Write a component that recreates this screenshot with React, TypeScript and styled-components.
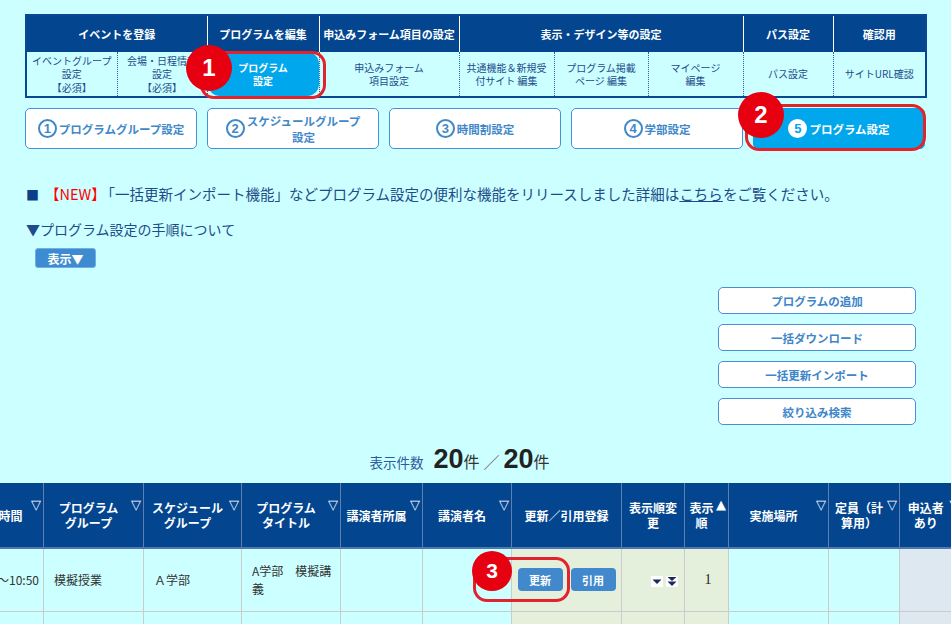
import { FC } from 'react';
import styled, { createGlobalStyle } from 'styled-components';

const GlobalStyle = createGlobalStyle`
  body {
    margin: 0;
    background: #ccffff;
    font-family: 'Noto Sans CJK JP', 'Noto Sans', sans-serif;
    overflow: hidden;
  }
`;

const Page = styled.div`
  position: relative;
  width: 951px;
  height: 624px;
  overflow: hidden;
`;

/* ---- top navigation ---- */

const NavTable = styled.table`
  width: 900px;
  margin: 14px 25px 0;
  border-collapse: collapse;
  table-layout: fixed;
  border: 2px solid #0a4893;
`;

const NavHead = styled.th`
  height: 36px;
  padding: 0;
  background: #03468f;
  color: #fff;
  font-size: 11px;
  font-weight: 700;
  border-left: 1px solid #ffffff;
`;

const NavCell = styled.td`
  height: 44px;
  padding: 0;
  text-align: center;
  color: #1d4c8c;
  font-size: 10px;
  line-height: 13.5px;
  border-left: 1px dotted #2a5fa5;
`;

const ActiveTab = styled.div`
  height: 44px;
  display: flex;
  align-items: center;
  justify-content: center;
  background: #00a7ec;
  color: #fff;
  font-weight: 700;
  border-radius: 12px;
`;

/* ---- step buttons ---- */

const Steps = styled.div`
  display: flex;
  gap: 10px;
  margin: 10px 25px 0;
`;

const StepButton = styled.div<{ $active?: boolean }>`
  width: 172px;
  height: 41px;
  box-sizing: border-box;
  display: flex;
  align-items: center;
  justify-content: center;
  gap: 2px;
  border: 1px solid ${(p) => (p.$active ? '#00a7ec' : '#4a8fd3')};
  border-radius: 5px;
  background: ${(p) => (p.$active ? '#00a7ec' : '#ffffff')};
  color: ${(p) => (p.$active ? '#ffffff' : '#3f88c9')};
  font-size: 11.5px;
  font-weight: 700;
  line-height: 16px;
  text-align: center;
`;

const NumCircle = styled.span<{ $active?: boolean }>`
  width: 19px;
  height: 19px;
  box-sizing: border-box;
  flex: none;
  display: flex;
  align-items: center;
  justify-content: center;
  border-radius: 50%;
  border: 2px solid ${(p) => (p.$active ? '#ffffff' : '#3f88c9')};
  background: ${(p) => (p.$active ? '#ffffff' : 'transparent')};
  color: ${(p) => (p.$active ? '#00a7ec' : '#3f88c9')};
  font-family: 'Liberation Sans', sans-serif;
  font-size: 13px;
  font-weight: 700;
`;

/* ---- notice ---- */

const Notice = styled.p`
  margin: 34px 0 0 26px;
  font-size: 14.5px;
  line-height: 22px;
  color: #1e4b8a;
  white-space: nowrap;

  .sq {
    color: #0d3f88;
    font-size: 13px;
    margin-right: 6px;
  }
  .new {
    color: #ff0000;
    margin-right: 2px;
  }
  a {
    color: #1e4b8a;
    text-decoration: underline;
  }
`;

const Procedure = styled.p`
  margin: 13px 0 0 26px;
  font-size: 14px;
  line-height: 20px;
  color: #1e4b8a;
`;

const ShowButton = styled.div`
  width: 61px;
  height: 20px;
  margin: 9px 0 0 35px;
  box-sizing: border-box;
  display: flex;
  align-items: center;
  justify-content: center;
  background: #3d8bd0;
  border: 1px solid #70aee3;
  border-radius: 3px;
  color: #fff;
  font-size: 12px;
  font-weight: 700;
`;

const ActionList = styled.div`
  display: flex;
  flex-direction: column;
  align-items: flex-end;
  gap: 10px;
  margin: 19px 35px 0 0;
`;

const ActionButton = styled.div`
  width: 198px;
  height: 27px;
  box-sizing: border-box;
  display: flex;
  align-items: center;
  justify-content: center;
  background: #fff;
  border: 1px solid #4a8fd3;
  border-radius: 5px;
  color: #3d86c8;
  font-size: 11.5px;
  font-weight: 700;
`;

/* ---- count ---- */

const Count = styled.div`
  height: 36px;
  margin-top: 19px;
  padding-right: 32px;
  display: flex;
  align-items: baseline;
  justify-content: center;
  color: #333;
  font-size: 16px;

  .label {
    color: #2d5a9c;
    font-size: 13.5px;
    margin-right: 10px;
  }
  b {
    font-family: 'Liberation Sans', sans-serif;
    font-size: 27px;
    color: #222;
  }
  .sep {
    color: #666;
    margin: 0 4px;
  }
`;

/* ---- list table ---- */

const TableWrap = styled.div`
  margin-top: 3px;
  overflow: hidden;
`;

const ListTable = styled.table`
  margin-left: -37px;
  border-collapse: collapse;
  table-layout: fixed;
  width: 998px;
`;

const HeadCell = styled.th<{ $marked?: boolean }>`
  position: relative;
  height: 65px;
  padding: ${(p) => (p.$marked ? '0 14px 0 4px' : '0 3px')};
  box-sizing: border-box;
  background: #03468f;
  color: #fff;
  font-size: 12px;
  font-weight: 700;
  line-height: 15px;
  border-left: 1px solid #5f7fae;
  border-bottom: 2px solid #4f78ae;
`;

const SortMark = styled.span`
  position: absolute;
  top: 15px;
  right: 2px;
  font-family: 'DejaVu Sans', sans-serif;
  font-size: 13px;
  font-weight: 400;
  line-height: 13px;
  color: #fff;
`;

type Tone = 'plain' | 'green' | 'grey';

const toneBg: Record<Tone, string> = {
  plain: '#ccffff',
  green: '#e5f0dc',
  grey: '#dde8f1',
};

const BodyCell = styled.td<{ $tone?: Tone; $align?: string }>`
  height: 63px;
  padding: 0 7px 0 10px;
  box-sizing: border-box;
  background: ${(p) => toneBg[p.$tone ?? 'plain']};
  border: 1px solid #cbcbcb;
  color: #333;
  font-size: 12px;
  line-height: 18px;
  text-align: ${(p) => p.$align ?? 'left'};
  vertical-align: middle;
`;

const TimeCell = styled(BodyCell)`
  padding: 0 4px 0 0;
  white-space: nowrap;
  overflow: hidden;
  direction: rtl;
`;

const EmptyCell = styled(BodyCell)`
  height: 40px;
`;

const ButtonCell = styled(BodyCell)`
  padding: 0;
  white-space: nowrap;
`;

const SmallButton = styled.span`
  display: inline-flex;
  align-items: center;
  justify-content: center;
  width: 45px;
  height: 23px;
  margin: 0 4px;
  border-radius: 4px;
  background: #4189cc;
  color: #fff;
  font-size: 11px;
  font-weight: 700;
`;

const ArrowCell = styled(BodyCell)`
  padding: 0 6px 0 0;
  white-space: nowrap;
`;

const ArrowBox = styled.span`
  display: inline-flex;
  width: 12px;
  height: 11px;
  margin-left: 3px;
  background: #fff;
  vertical-align: middle;
`;

const SerifNum = styled.span`
  font-family: 'Liberation Serif', serif;
  font-size: 14px;
  color: #222;
`;

/* ---- annotations ---- */

const Ring = styled.div<{ $x: number; $y: number; $w: number; $h: number }>`
  position: absolute;
  left: ${(p) => p.$x}px;
  top: ${(p) => p.$y}px;
  width: ${(p) => p.$w}px;
  height: ${(p) => p.$h}px;
  box-sizing: border-box;
  border: 3px solid #e3232c;
  border-radius: 14px;
  pointer-events: none;
  z-index: 2;
`;

const Badge = styled.div<{ $x: number; $y: number; $d: number }>`
  position: absolute;
  left: ${(p) => p.$x}px;
  top: ${(p) => p.$y}px;
  width: ${(p) => p.$d}px;
  height: ${(p) => p.$d}px;
  border-radius: 50%;
  background: #e60010;
  color: #fff;
  display: flex;
  align-items: center;
  justify-content: center;
  font-family: 'Liberation Sans', sans-serif;
  font-size: ${(p) => Math.round(p.$d * 0.52)}px;
  font-weight: 600;
  z-index: 3;
`;

const navCols = [91, 90, 112, 140, 95, 94, 95, 90, 93];
const listCols = [80, 100, 98, 99, 82, 89, 110, 63, 44, 100, 71, 62];

type Head = { label: string[]; mark?: string };

const heads: Head[] = [
  { label: ['開催時間'], mark: '▽' },
  { label: ['プログラム', 'グループ'], mark: '▽' },
  { label: ['スケジュール', 'グループ'], mark: '▽' },
  { label: ['プログラム', 'タイトル'], mark: '▽' },
  { label: ['講演者所属'], mark: '▽' },
  { label: ['講演者名'], mark: '▽' },
  { label: ['更新／引用登録'] },
  { label: ['表示順変', '更'] },
  { label: ['表示', '順'], mark: '▲' },
  { label: ['実施場所'], mark: '▽' },
  { label: ['定員（計', '算用）'], mark: '▽' },
  { label: ['申込者', 'あり'], mark: '▽' },
];

const tones: Tone[] = [
  'plain', 'plain', 'plain', 'plain', 'plain', 'plain',
  'green', 'green', 'green', 'plain', 'plain', 'grey',
];

const Lines: FC<{ lines: string[] }> = ({ lines }) => (
  <div>
    {lines.map((l, i) => (
      <span key={i}>
        {i > 0 && <br />}
        {l}
      </span>
    ))}
  </div>
);

const App: FC = () => {
  return (
    <Page>
      <GlobalStyle />

      <NavTable>
        <colgroup>
          {navCols.map((w, i) => (
            <col key={i} style={{ width: w }} />
          ))}
        </colgroup>
        <thead>
          <tr>
            <NavHead colSpan={2}>イベントを登録</NavHead>
            <NavHead>プログラムを編集</NavHead>
            <NavHead>申込みフォーム項目の設定</NavHead>
            <NavHead colSpan={3}>表示・デザイン等の設定</NavHead>
            <NavHead>パス設定</NavHead>
            <NavHead>確認用</NavHead>
          </tr>
        </thead>
        <tbody>
          <tr>
            <NavCell><Lines lines={['イベントグループ', '設定', '【必須】']} /></NavCell>
            <NavCell><Lines lines={['会場・日程情報', '設定', '【必須】']} /></NavCell>
            <NavCell>
              <ActiveTab><Lines lines={['プログラム', '設定']} /></ActiveTab>
            </NavCell>
            <NavCell><Lines lines={['申込みフォーム', '項目設定']} /></NavCell>
            <NavCell><Lines lines={['共通機能＆新規受', '付サイト 編集']} /></NavCell>
            <NavCell><Lines lines={['プログラム掲載', 'ページ 編集']} /></NavCell>
            <NavCell><Lines lines={['マイページ', '編集']} /></NavCell>
            <NavCell>パス設定</NavCell>
            <NavCell>サイトURL確認</NavCell>
          </tr>
        </tbody>
      </NavTable>

      <Steps>
        <StepButton><NumCircle>1</NumCircle>プログラムグループ設定</StepButton>
        <StepButton>
          <NumCircle>2</NumCircle>
          <span>スケジュールグループ<br />設定</span>
        </StepButton>
        <StepButton><NumCircle>3</NumCircle>時間割設定</StepButton>
        <StepButton><NumCircle>4</NumCircle>学部設定</StepButton>
        <StepButton $active><NumCircle $active>5</NumCircle>プログラム設定</StepButton>
      </Steps>

      <Notice>
        <span className="sq">■</span>
        <span className="new">【NEW】</span>
        「一括更新インポート機能」などプログラム設定の便利な機能をリリースしました詳細は
        <a href="#">こちら</a>をご覧ください。
      </Notice>

      <Procedure>▼プログラム設定の手順について</Procedure>
      <ShowButton>表示▼</ShowButton>

      <ActionList>
        <ActionButton>プログラムの追加</ActionButton>
        <ActionButton>一括ダウンロード</ActionButton>
        <ActionButton>一括更新インポート</ActionButton>
        <ActionButton>絞り込み検索</ActionButton>
      </ActionList>

      <Count>
        <span className="label">表示件数</span>
        <b>20</b>件<span className="sep">／</span><b>20</b>件
      </Count>

      <TableWrap>
        <ListTable>
          <colgroup>
            {listCols.map((w, i) => (
              <col key={i} style={{ width: w }} />
            ))}
          </colgroup>
          <thead>
            <tr>
              {heads.map((h, i) => (
                <HeadCell key={i} $marked={!!h.mark}>
                  <Lines lines={h.label} />
                  {h.mark && <SortMark>{h.mark}</SortMark>}
                </HeadCell>
              ))}
            </tr>
          </thead>
          <tbody>
            <tr>
              <TimeCell $align="right"><span dir="ltr">10:00～10:50</span></TimeCell>
              <BodyCell>模擬授業</BodyCell>
              <BodyCell>Ａ学部</BodyCell>
              <BodyCell>A学部　模擬講義</BodyCell>
              <BodyCell />
              <BodyCell />
              <ButtonCell $tone="green" $align="center">
                <SmallButton>更新</SmallButton>
                <SmallButton>引用</SmallButton>
              </ButtonCell>
              <ArrowCell $tone="green" $align="right">
                <ArrowBox>
                  <svg width="12" height="11" viewBox="0 0 12 11">
                    <polygon points="1.5,3.5 10.5,3.5 6,8" fill="#1a2a5a" />
                  </svg>
                </ArrowBox>
                <ArrowBox>
                  <svg width="12" height="11" viewBox="0 0 12 11">
                    <polygon points="1.5,1 10.5,1 6,5" fill="#1a2a5a" />
                    <polygon points="1.5,5.5 10.5,5.5 6,10" fill="#1a2a5a" />
                  </svg>
                </ArrowBox>
              </ArrowCell>
              <BodyCell $tone="green" $align="center">
                <SerifNum>1</SerifNum>
              </BodyCell>
              <BodyCell />
              <BodyCell />
              <BodyCell $tone="grey" />
            </tr>
            <tr>
              {tones.map((t, i) => (
                <EmptyCell key={i} $tone={t} />
              ))}
            </tr>
          </tbody>
        </ListTable>
      </TableWrap>

      <Ring $x={200} $y={51} $w={126} $h={48} />
      <Badge $x={186} $y={45} $d={46}>1</Badge>
      <Ring $x={745} $y={104} $w={181} $h={47} />
      <Badge $x={738} $y={92} $d={46}>2</Badge>
      <Ring $x={473} $y={557} $w={97} $h={45} />
      <Badge $x={472} $y={551} $d={40}>3</Badge>
    </Page>
  );
};

export default App;
